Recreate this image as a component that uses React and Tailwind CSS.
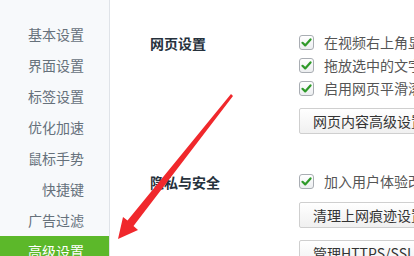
import React from "react";

const menu = ["基本设置", "界面设置", "标签设置", "优化加速", "鼠标手势", "快捷键", "广告过滤", "高级设置"];

const Check = () => (
  <span className="flex h-[15px] w-[15px] shrink-0 items-center justify-center rounded-[3px] border border-[#a9adb3] bg-gradient-to-b from-white to-[#eceef0]">
    <svg width="11" height="11" viewBox="0 0 11 11">
      <path d="M1.5 5.8 L4.2 8.4 L9.5 2.4" fill="none" stroke="#2f9a2a" strokeWidth="2.2" strokeLinecap="round" strokeLinejoin="round" />
    </svg>
  </span>
);

const Option = ({ text }) => (
  <div className="flex h-[23px] items-center gap-[10px] whitespace-nowrap">
    <Check />
    <span>{text}</span>
  </div>
);

const Btn = ({ text }) => (
  <div className="flex h-[26px] w-[180px] shrink-0 items-center whitespace-nowrap rounded-[2px] border border-[#cfcfcf] bg-gradient-to-b from-white to-[#f0f0f0] pl-[13px] text-[#333]">
    {text}
  </div>
);

export default function App() {
  return (
    <div
      className="relative flex h-[256px] w-[414px] overflow-hidden bg-white text-[14px]"
      style={{ fontFamily: '"Noto Sans CJK SC", "Liberation Sans", sans-serif' }}
    >
      {/* sidebar */}
      <div className="flex w-[110px] shrink-0 flex-col border-r border-[#dfe3e8] bg-[#f7f9fb] pt-[19px]">
        {menu.map((m, i) => (
          <div
            key={m}
            className={`flex h-[31px] shrink-0 items-center justify-end pr-[25px] ${
              i === menu.length - 1 ? "bg-[#5cb82a] text-white" : "text-[#66717b]"
            }`}
          >
            {m}
          </div>
        ))}
      </div>

      {/* content */}
      <div className="flex min-w-0 flex-1 flex-col gap-[36px] overflow-hidden pl-[40px] pt-[31px] text-[#555]">
        <div className="flex">
          <div className="w-[149px] shrink-0 pt-[1px] font-bold leading-[23px] text-[#26313c]">网页设置</div>
          <div className="flex flex-col">
            <Option text="在视频右上角显示" />
            <Option text="拖放选中的文字" />
            <Option text="启用网页平滑滚动" />
            <div className="mt-[8px] flex">
              <Btn text="网页内容高级设置" />
            </div>
          </div>
        </div>
        <div className="flex">
          <div className="w-[149px] shrink-0 pt-[1px] font-bold leading-[23px] text-[#26313c]">隐私与安全</div>
          <div className="flex flex-col">
            <Option text="加入用户体验改进计划" />
            <div className="mt-[9px] flex">
              <Btn text="清理上网痕迹设置" />
            </div>
            <div className="mt-[12px] flex">
              <Btn text="管理HTTPS/SSL证书" />
            </div>
          </div>
        </div>
      </div>

      {/* annotation arrow */}
      <svg className="pointer-events-none absolute left-0 top-0" width="414" height="256">
        <polygon
          points="118,239 123,217 127.5,220.5 231,94 233,96 133.5,226 138,230"
          fill="#f0282c"
        />
      </svg>
    </div>
  );
}
